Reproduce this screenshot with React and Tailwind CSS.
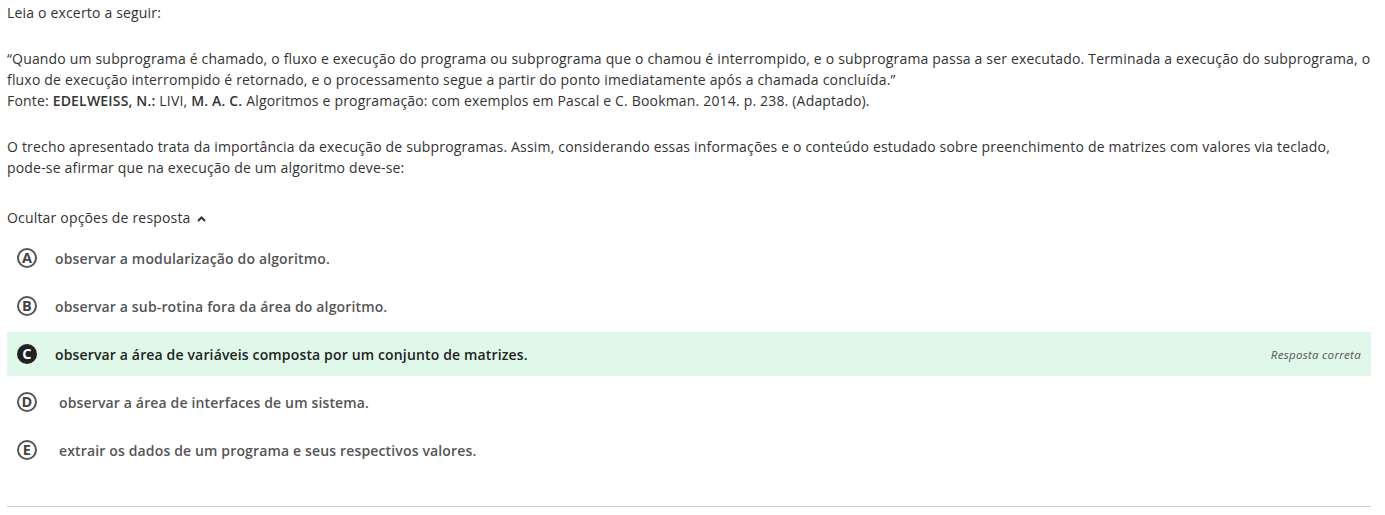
import React from 'react';

const options = [
  { letter: 'A', text: 'observar a modularização do algoritmo.' },
  { letter: 'B', text: 'observar a sub-rotina fora da área do algoritmo.' },
  { letter: 'C', text: 'observar a área de variáveis composta por um conjunto de matrizes.', correct: true },
  { letter: 'D', text: 'observar a área de interfaces de um sistema.', shift: true },
  { letter: 'E', text: 'extrair os dados de um programa e seus respectivos valores.', shift: true },
];

function Option({ opt }) {
  return (
    <div
      className={`flex items-center h-[44px] pl-[10px] pr-[10px] ${opt.correct ? 'bg-[#dff8e9]' : ''}`}
    >
      <span
        className={`flex items-center justify-center w-[20px] h-[20px] rounded-full text-[14.5px] font-bold leading-none ${
          opt.correct ? 'bg-[#222222] text-white' : 'border-2 border-[#555555] text-[#444444]'
        }`}
      >
        {opt.letter}
      </span>
      <span
        className={`${opt.shift ? 'ml-[22px]' : 'ml-[18px]'} text-[14px] font-semibold tracking-[0.15px] ${
          opt.correct ? 'text-[#222222]' : 'text-[#555555]'
        }`}
      >
        {opt.text}
      </span>
      {opt.correct && (
        <span className="ml-auto text-[11.5px] italic text-[#555555] tracking-[0.3px]">Resposta correta</span>
      )}
    </div>
  );
}

export default function App() {
  return (
    <div
      className="bg-white pl-[7px] pr-[14px] pt-[2px] text-[14px] leading-[21px] tracking-[0.18px] text-[#333333]"
      style={{ fontFamily: '"Open Sans", "Liberation Sans", sans-serif' }}
    >
      <p>Leia o excerto a seguir:</p>
      <p className="mt-[25px] mr-[-8px]">
        “Quando um subprograma é chamado, o fluxo e execução do programa ou subprograma que o chamou é interrompido, e o
        subprograma passa a ser executado. Terminada a execução do subprograma, o fluxo de execução interrompido é
        retornado, e o processamento segue a partir do ponto imediatamente após a chamada concluída.”
      </p>
      <p>
        Fonte: <span className="font-semibold">EDELWEISS, N.:</span> LIVI, <span className="font-semibold">M. A. C.</span>{' '}
        Algoritmos e programação: com exemplos em Pascal e C. Bookman. 2014. p. 238. (Adaptado).
      </p>
      <p className="mt-[25px]">
        O trecho apresentado trata da importância da execução de subprogramas. Assim, considerando essas informações e o
        conteúdo estudado sobre preenchimento de matrizes com valores via teclado, pode-se afirmar que na execução de um
        algoritmo deve-se:
      </p>
      <div className="mt-[29px] flex items-center gap-[6px]">
        <span>Ocultar opções de resposta</span>
        <svg width="9" height="6" viewBox="0 0 9 6" className="mt-[2px]">
          <path d="M1 5 L4.5 1.5 L8 5" fill="none" stroke="#333333" strokeWidth="2" />
        </svg>
      </div>
      <div className="mt-[8px] flex flex-col gap-[4px]">
        {options.map((opt) => (
          <Option key={opt.letter} opt={opt} />
        ))}
      </div>
      <div className="mt-[34px] border-t border-[#cccccc]" />
      <div className="h-[8px]" />
    </div>
  );
}
